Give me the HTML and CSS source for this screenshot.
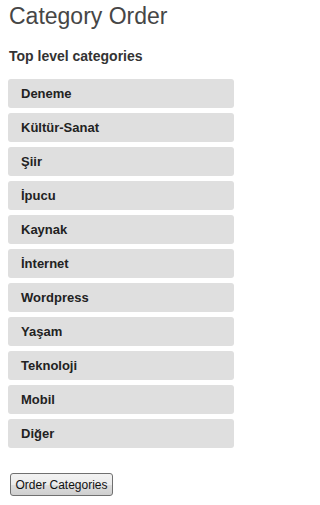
FILE: index.html
```html
<!DOCTYPE html>
<html>
<head>
<meta charset="utf-8">
<title>Category Order</title>
<link rel="stylesheet" href="styles.css">
</head>
<body>
<div class="wrap">
  <h1 class="title">Category Order</h1>
  <h3 class="subtitle">Top level categories</h3>
  <ul class="cats">
    <li class="cat">Deneme</li>
    <li class="cat">Kültür-Sanat</li>
    <li class="cat">Şiir</li>
    <li class="cat">İpucu</li>
    <li class="cat">Kaynak</li>
    <li class="cat">İnternet</li>
    <li class="cat">Wordpress</li>
    <li class="cat">Yaşam</li>
    <li class="cat">Teknoloji</li>
    <li class="cat">Mobil</li>
    <li class="cat">Diğer</li>
  </ul>
  <div class="actions">
    <button class="btn" type="button">Order Categories</button>
  </div>
</div>
</body>
</html>
```
FILE: styles.css
```css
html, body {
  margin: 0;
  padding: 0;
  background: #ffffff;
}
body {
  font-family: "Liberation Sans", Arial, sans-serif;
  color: #333;
}
.wrap {
  width: 226px;
  padding: 3px 0 0 8px;
}
.title {
  margin: 0;
  font-size: 23px;
  line-height: 26px;
  font-weight: normal;
  color: #464646;
  padding-left: 1px;
  white-space: nowrap;
}
.subtitle {
  margin: 19px 0 0;
  font-size: 14px;
  line-height: 17px;
  font-weight: bold;
  color: #333;
  padding-left: 1px;
}
.cats {
  list-style: none;
  margin: 14px 0 0;
  padding: 0;
  display: flex;
  flex-direction: column;
  gap: 5px;
}
.cat {
  background: #dfdfdf;
  border-radius: 3px;
  height: 28px;
  padding: 1px 0 0 13px;
  line-height: 28px;
  font-size: 13px;
  font-weight: bold;
  color: #222;
}
.actions {
  margin-top: 25px;
  padding-left: 2px;
}
.btn {
  margin: 0;
  height: 23px;
  width: 103px;
  padding: 0 4px;
  font-family: "Liberation Sans", Arial, sans-serif;
  font-size: 12px;
  color: #111;
  border: 1px solid #707070;
  border-radius: 3px;
  background: linear-gradient(#f2f2f2 0%, #ebebeb 50%, #dddddd 51%, #cfcfcf 100%);
}
```
